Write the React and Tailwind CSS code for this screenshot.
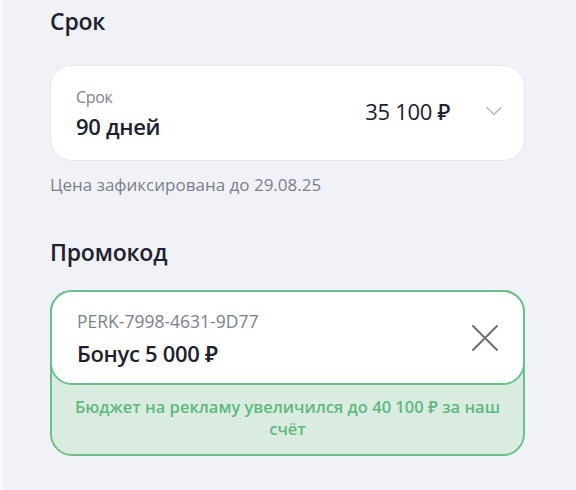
export default function App() {
  return (
    <div
      className="min-h-[490px] w-[576px] bg-[#f0f2f7] border-l-[3px] border-[#f8f9fb] text-[#21202e]"
      style={{ fontFamily: "'Open Sans', 'Noto Sans', sans-serif" }}
    >
      <div className="ml-[47px] w-[475px] pt-[6px]">
        <h2 className="text-[23px] leading-[30px] font-semibold tracking-[-0.2px]">Срок</h2>

        <div className="mt-[29px] h-[96px] rounded-[22px] bg-white border border-[#e6e8ee] flex items-center pl-[25px] pr-[22px]">
          <div className="flex-1">
            <div className="text-[16px] leading-[20px] text-[#7c7f8b] tracking-[-0.3px]">Срок</div>
            <div className="mt-[5px] text-[22px] leading-[28px] font-semibold tracking-[-0.3px]">90 дней</div>
          </div>
          <div className="text-[22px] leading-[26px] font-medium tracking-[-0.3px] mb-[5px]">35 100 ₽</div>
          <svg className="ml-[36px] mb-[4px]" width="16" height="10" viewBox="0 0 16 10" fill="none">
            <path d="M1 1.5 8 8.5 15 1.5" stroke="#b9bcc5" strokeWidth="1.6" strokeLinecap="round" strokeLinejoin="round" />
          </svg>
        </div>

        <p className="mt-[14px] text-[17px] leading-[20px] text-[#7c7f8b]">Цена зафиксирована до 29.08.25</p>

        <h2 className="mt-[42px] text-[23px] leading-[30px] font-semibold tracking-[-0.2px]">Промокод</h2>

        <div className="mt-[23px] rounded-[22px] border-2 border-[#6dc08c] bg-[#d9ecdf]">
          <div className="-m-[2px] h-[95px] rounded-[22px] bg-white border-2 border-[#6dc08c] flex items-center pl-[25px] pr-[25px]">
            <div className="flex-1">
              <div className="text-[17.5px] leading-[22px] text-[#7c7f8b]">PERK-7998-4631-9D77</div>
              <div className="mt-[8px] text-[22px] leading-[26px] font-semibold tracking-[-0.3px]">Бонус 5 000 ₽</div>
            </div>
            <svg width="26" height="26" viewBox="0 0 26 26" fill="none">
              <path d="M1 1 25 25M25 1 1 25" stroke="#6e6e72" strokeWidth="2" strokeLinecap="round" />
            </svg>
          </div>
          <p className="px-[16px] pt-[13px] pb-[14px] text-center text-[16.5px] leading-[22px] font-semibold text-[#5fb97f]">
            Бюджет на рекламу увеличился до 40 100 ₽ за наш счёт
          </p>
        </div>
      </div>
    </div>
  );
}
